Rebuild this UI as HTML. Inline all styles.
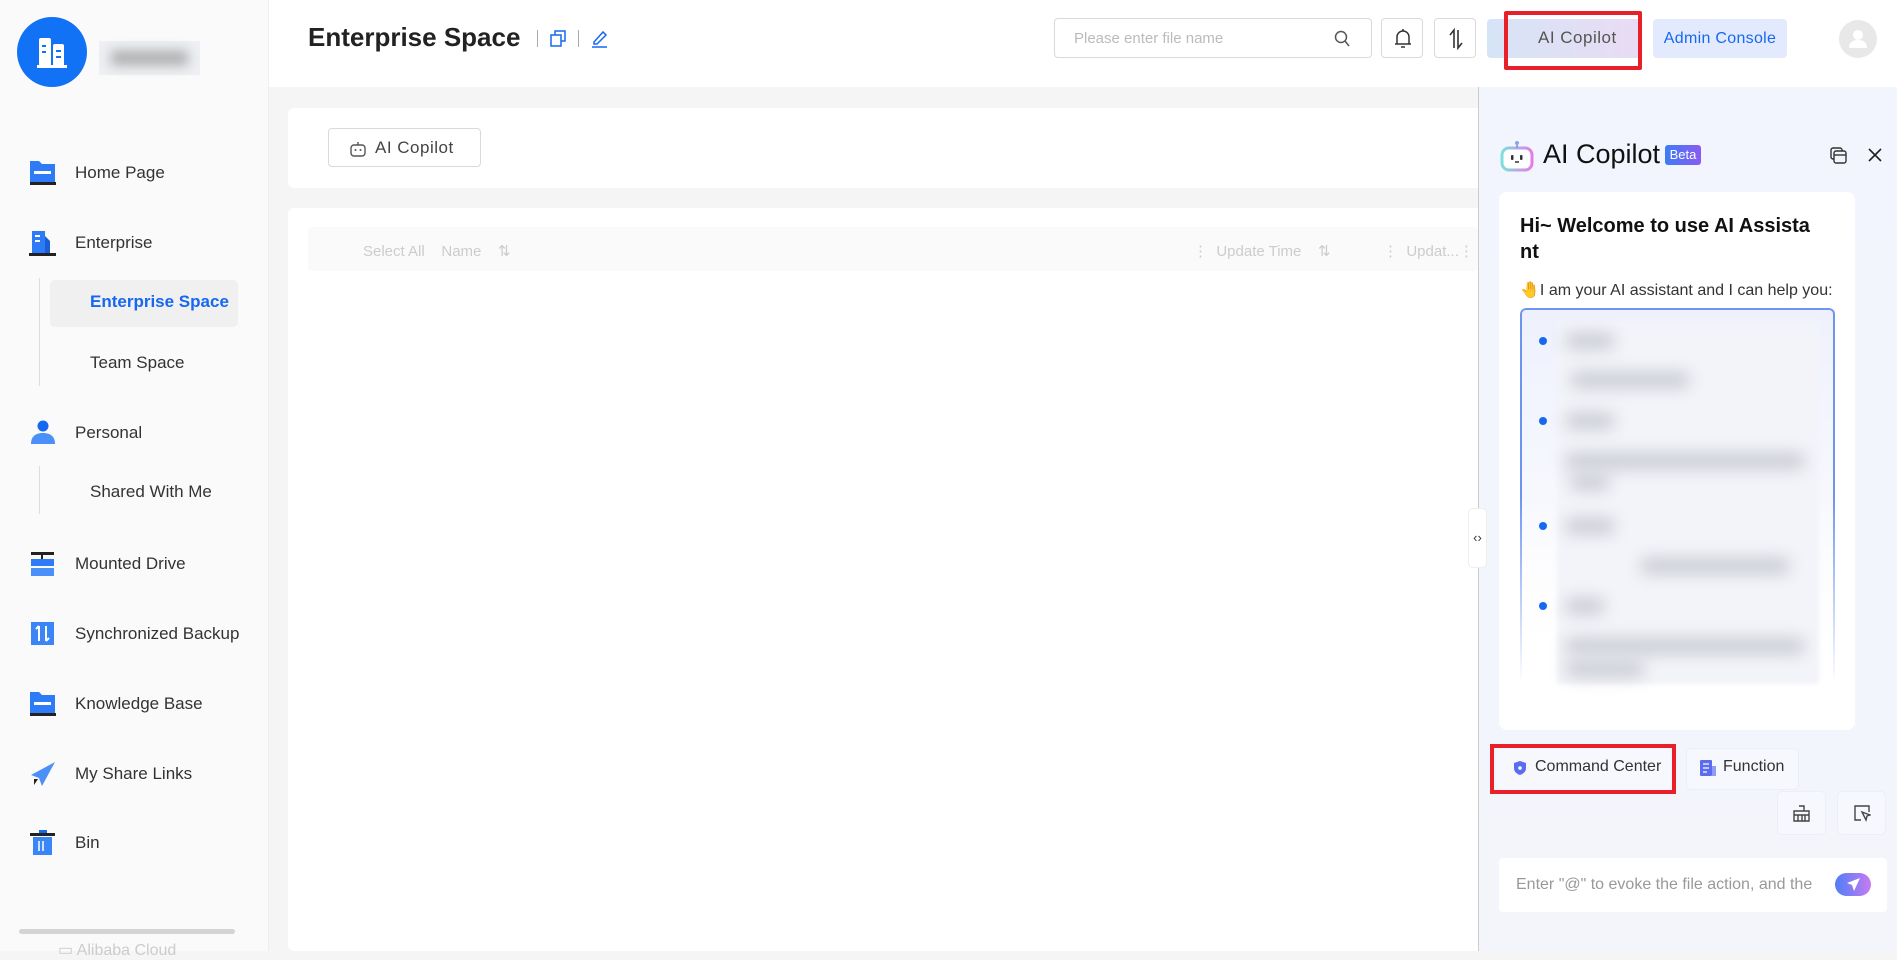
<!DOCTYPE html>
<html><head><meta charset="utf-8"><style>
*{box-sizing:border-box;margin:0;padding:0}
body{width:1897px;height:951px;overflow:hidden;font-family:"Liberation Sans",sans-serif;background:#f5f5f5;position:relative;color:#333}
.abs{position:absolute}
.side{left:0;top:0;width:269px;height:951px;background:#fafafa;border-right:1px solid #efefef}
.nav{position:absolute;left:75px;font-size:17px;color:#333;transform:translateY(-50%)}
.sub{left:90px}
.ico{position:absolute;left:29px;width:27px;height:26px;transform:translateY(-50%)}
.hdr{left:269px;top:0;width:1628px;height:87px;background:#fff}
.btn{position:absolute;border:1px solid #d9d9d9;border-radius:4px;background:#fff}
.blur{position:absolute;background:#c9cbd3;filter:blur(8px);border-radius:8px;height:16px}
</style></head><body>
<div class="abs side">
  <div class="abs" style="left:17px;top:17px;width:70px;height:70px;border-radius:50%;background:#1272f5"></div>
  <svg class="abs" style="left:37px;top:36px" width="30" height="32" viewBox="0 0 30 32"><rect x="2" y="2" width="12" height="28" rx="2" fill="#fff"/><rect x="16" y="8" width="11" height="22" rx="2" fill="#fff"/><rect x="5" y="9" width="4" height="2" fill="#1272f5"/><rect x="5" y="15" width="4" height="2" fill="#1272f5"/><rect x="19" y="14" width="5" height="2" fill="#1272f5"/><rect x="19" y="20" width="5" height="2" fill="#1272f5"/><rect x="0" y="29" width="30" height="3" fill="#fff"/></svg>
  <div class="abs" style="left:99px;top:41px;width:101px;height:34px;background:#eef0f4"><div style="margin:10px 12px;height:14px;background:#aaa;filter:blur(6px)"></div></div>

  <svg class="ico" style="top:173px" viewBox="0 0 27 26"><path d="M1 1h9l3 3h13v19H1z" fill="#2d7bf6"/><rect x="5" y="11" width="17" height="3" fill="#fff"/><rect x="1" y="22" width="26" height="3" fill="#222"/></svg>
  <div class="nav" style="top:173px">Home Page</div>
  <svg class="ico" style="top:243px" viewBox="0 0 27 26"><path d="M3 1h13v22H3z" fill="#2d7bf6"/><path d="M16 6l5 5v12h-5z" fill="#1a5fd6"/><rect x="6" y="5" width="5" height="2" fill="#fff"/><rect x="6" y="10" width="5" height="2" fill="#fff"/><rect x="0" y="23" width="27" height="3" fill="#222"/></svg>
  <div class="nav" style="top:243px">Enterprise</div>
  <div class="abs" style="left:39px;top:278px;width:1px;height:108px;background:#ddd"></div>
  <div class="abs" style="left:50px;top:280px;width:188px;height:47px;background:#f0f0f0;border-radius:5px"></div>
  <div class="nav sub" style="top:302px;color:#1668f0;font-weight:bold">Enterprise Space</div>
  <div class="nav sub" style="top:363px">Team Space</div>
  <svg class="ico" style="top:433px" viewBox="0 0 27 26"><circle cx="14" cy="6" r="5.5" fill="#1668f0"/><path d="M2 24c0-8 5-11 12-11s12 3 12 11z" fill="#4b90f8"/></svg>
  <div class="nav" style="top:433px">Personal</div>
  <div class="abs" style="left:39px;top:466px;width:1px;height:48px;background:#ddd"></div>
  <div class="nav sub" style="top:492px">Shared With Me</div>
  <svg class="ico" style="top:564px" viewBox="0 0 27 26"><rect x="2" y="1" width="23" height="3" fill="#222"/><rect x="12" y="1" width="2" height="8" fill="#222"/><rect x="2" y="8" width="23" height="7" fill="#2d7bf6"/><rect x="2" y="17" width="23" height="8" fill="#4b90f8"/></svg>
  <div class="nav" style="top:564px">Mounted Drive</div>
  <svg class="ico" style="top:634px" viewBox="0 0 27 26"><rect x="2" y="1" width="23" height="23" fill="#3b86f7"/><path d="M10 5v15M7 8l3-3M17 20V5M20 17l-3 3" stroke="#fff" stroke-width="2" fill="none"/></svg>
  <div class="nav" style="top:634px">Synchronized Backup</div>
  <svg class="ico" style="top:704px" viewBox="0 0 27 26"><path d="M1 1h9l3 3h13v19H1z" fill="#2d7bf6"/><rect x="5" y="11" width="17" height="3" fill="#fff"/><rect x="1" y="22" width="26" height="3" fill="#222"/></svg>
  <div class="nav" style="top:704px">Knowledge Base</div>
  <svg class="ico" style="top:774px" viewBox="0 0 27 26"><path d="M26 1L2 14l8 3 3 8z" fill="#4b90f8"/><path d="M5 18l4 0-4 6z" fill="#222"/></svg>
  <div class="nav" style="top:774px">My Share Links</div>
  <svg class="ico" style="top:843px" viewBox="0 0 27 26"><rect x="10" y="0" width="8" height="3" fill="#1668f0"/><rect x="1" y="3" width="25" height="3" fill="#222"/><rect x="4" y="7" width="19" height="18" fill="#3b86f7"/><path d="M10 11v10M14 11v10" stroke="#fff" stroke-width="1.5"/></svg>
  <div class="nav" style="top:843px">Bin</div>
  <div class="abs" style="left:19px;top:929px;width:216px;height:5px;border-radius:3px;background:#d4d4d4"></div>
  <div class="abs" style="left:58px;top:940px;font-size:16px;color:#ccc">▭ Alibaba Cloud</div>
</div>

<div class="abs hdr"></div>
<div class="abs" style="left:308px;top:22px;font-size:26px;font-weight:bold;color:#222">Enterprise Space</div>
<div class="abs" style="left:537px;top:30px;width:1px;height:17px;background:#aaa"></div>
<svg class="abs" style="left:550px;top:30px" width="16" height="17" viewBox="0 0 16 17"><rect x="1" y="5" width="10" height="11" fill="none" stroke="#1668f0" stroke-width="1.5"/><path d="M5 5V1h10v10h-4" fill="none" stroke="#1668f0" stroke-width="1.5"/></svg>
<div class="abs" style="left:578px;top:30px;width:1px;height:17px;background:#aaa"></div>
<svg class="abs" style="left:591px;top:29px" width="17" height="19" viewBox="0 0 17 19"><path d="M3 13L12 3l3 3-9 9H3z" fill="none" stroke="#1668f0" stroke-width="1.5"/><path d="M1 18h15" stroke="#1668f0" stroke-width="1.5"/></svg>

<div class="btn" style="left:1054px;top:18px;width:318px;height:40px"><span style="position:absolute;left:19px;top:11px;font-size:15px;color:#bbb">Please enter file name</span>
<svg style="position:absolute;right:20px;top:11px" width="17" height="18" viewBox="0 0 17 18"><circle cx="7" cy="7" r="5.5" fill="none" stroke="#555" stroke-width="1.5"/><path d="M11 11l4 5" stroke="#555" stroke-width="1.5"/></svg></div>
<div class="btn" style="left:1381px;top:18px;width:42px;height:40px"><svg style="margin:9px 11px" width="20" height="22" viewBox="0 0 20 22"><path d="M4 16V9a6 6 0 0112 0v7h2H2z" fill="none" stroke="#333" stroke-width="1.5"/><path d="M10 1v2M8 19h4" stroke="#333" stroke-width="1.5"/></svg></div>
<div class="btn" style="left:1434px;top:18px;width:42px;height:40px"><svg style="margin:9px 11px" width="20" height="22" viewBox="0 0 20 22"><path d="M8 20V2L4 7M12 2v18l4-5" fill="none" stroke="#333" stroke-width="1.6"/></svg></div>
<div class="abs" style="left:1487px;top:19px;width:153px;height:39px;border-radius:4px;background:linear-gradient(90deg,#d6e4f7,#e9dcf3)"></div>
<div class="abs" style="left:1538px;top:28px;font-size:17px;color:#555;letter-spacing:.5px">AI Copilot</div>
<div class="abs" style="left:1504px;top:11px;width:138px;height:59px;border:4px solid #e8202a;border-radius:2px"></div>
<div class="abs" style="left:1653px;top:19px;width:134px;height:39px;border-radius:4px;background:#e3eafd;color:#1668f0;font-size:16px;text-align:center;line-height:39px;letter-spacing:.3px">Admin Console</div>
<div class="abs" style="left:1839px;top:20px;width:38px;height:38px;border-radius:50%;background:#e8e8e8"><svg width="38" height="38" viewBox="0 0 38 38"><circle cx="19" cy="15" r="5" fill="#fff"/><path d="M10 28c0-6 4-8 9-8s9 2 9 8z" fill="#fff"/></svg></div>

<div class="abs" style="left:288px;top:108px;width:1200px;height:80px;background:#fff;border-radius:6px"></div>
<div class="btn" style="left:328px;top:128px;width:153px;height:39px"><svg style="position:absolute;left:20px;top:12px" width="18" height="16" viewBox="0 0 18 16"><rect x="2" y="4" width="14" height="11" rx="3" fill="none" stroke="#555" stroke-width="1.4"/><path d="M9 1v3" stroke="#555" stroke-width="1.4"/><circle cx="6.5" cy="9" r="1" fill="#555"/><circle cx="11.5" cy="9" r="1" fill="#555"/></svg><span style="position:absolute;left:46px;top:9px;font-size:17px;color:#444;letter-spacing:.5px">AI Copilot</span></div>
<div class="abs" style="left:288px;top:208px;width:1200px;height:743px;background:#fff;border-radius:6px"></div>
<div class="abs" style="left:308px;top:227px;width:1170px;height:44px;background:#fafafa;border-radius:4px"></div>
<div class="abs" style="left:363px;top:242px;font-size:15px;color:#ccc">Select All&nbsp;&nbsp;&nbsp;&nbsp;Name&nbsp;&nbsp;&nbsp;&nbsp;⇅</div>
<div class="abs" style="left:1193px;top:242px;font-size:15px;color:#ccc">⋮&nbsp;&nbsp;Update Time&nbsp;&nbsp;&nbsp;&nbsp;⇅</div>
<div class="abs" style="left:1383px;top:242px;font-size:15px;color:#ccc">⋮&nbsp;&nbsp;Updat...⋮</div>

<div class="abs" style="left:1478px;top:87px;width:419px;height:864px;background:linear-gradient(180deg,#f2f5fd,#f3f5fb);border-left:1px solid #ccc"></div>
<div class="abs" style="left:1468px;top:508px;width:19px;height:60px;background:#fff;border:1px solid #eee;border-radius:5px;font-size:13px;line-height:58px;text-align:center;color:#333">‹›</div>
<svg class="abs" style="left:1499px;top:140px" width="36" height="32" viewBox="0 0 36 32"><defs><linearGradient id="g" x1="0" x2="1"><stop offset="0" stop-color="#7de0d9"/><stop offset="1" stop-color="#e37be8"/></linearGradient></defs><rect x="3" y="8" width="30" height="22" rx="7" fill="#fff" stroke="url(#g)" stroke-width="3"/><circle cx="18" cy="3" r="2" fill="#8aa2f0"/><path d="M18 5v3" stroke="#8aa2f0" stroke-width="2"/><rect x="12" y="15" width="2.5" height="5" rx="1" fill="#333"/><rect x="21" y="15" width="2.5" height="5" rx="1" fill="#333"/><path d="M16 22h4" stroke="#333" stroke-width="1.5"/></svg>
<div class="abs" style="left:1543px;top:139px;font-size:27px;color:#111">AI Copilot</div>
<div class="abs" style="left:1665px;top:145px;width:36px;height:20px;border-radius:3px;background:linear-gradient(90deg,#3d7cf7,#8a5cf0);color:#fff;font-size:13px;text-align:center;line-height:20px">Beta</div>
<svg class="abs" style="left:1830px;top:147px" width="17" height="17" viewBox="0 0 17 17"><rect x="1" y="1" width="11" height="11" rx="2" fill="none" stroke="#333" stroke-width="1.4"/><rect x="4" y="4" width="12" height="12" rx="2" fill="#f2f5fd" stroke="#333" stroke-width="1.4"/><path d="M4 8h12" stroke="#333" stroke-width="1.4"/></svg>
<svg class="abs" style="left:1868px;top:148px" width="14" height="14" viewBox="0 0 14 14"><path d="M1 1l12 12M13 1L1 13" stroke="#222" stroke-width="1.6"/></svg>

<div class="abs" style="left:1499px;top:192px;width:356px;height:538px;background:#fff;border-radius:8px"></div>
<div class="abs" style="left:1520px;top:213px;font-size:20px;font-weight:bold;color:#111;line-height:26px;white-space:nowrap">Hi~ Welcome to use AI Assista<br>nt</div>
<div class="abs" style="left:1520px;top:280px;font-size:16px;color:#333">🤚I am your AI assistant and I can help you:</div>
<div class="abs" style="left:1520px;top:308px;width:315px;height:377px;border:2px solid #6d95f0;border-bottom:none;border-radius:6px 6px 0 0;background:linear-gradient(180deg,#eef1fd,#fff 95%);-webkit-mask-image:linear-gradient(180deg,#000 50%,transparent)"></div>
<div class="abs" style="left:1557px;top:321px;width:262px;height:363px;background:#f3f4f9;filter:blur(2px)"></div>
<div class="blur" style="left:1565px;top:333px;width:50px"></div>
<div class="blur" style="left:1570px;top:372px;width:120px"></div>
<div class="blur" style="left:1565px;top:413px;width:50px"></div>
<div class="blur" style="left:1565px;top:453px;width:240px"></div>
<div class="blur" style="left:1570px;top:474px;width:40px"></div>
<div class="blur" style="left:1565px;top:518px;width:50px"></div>
<div class="blur" style="left:1640px;top:558px;width:150px"></div>
<div class="blur" style="left:1565px;top:598px;width:40px"></div>
<div class="blur" style="left:1565px;top:638px;width:240px"></div>
<div class="blur" style="left:1565px;top:661px;width:80px"></div>
<div class="abs" style="left:1539px;top:337px;width:8px;height:8px;border-radius:50%;background:#1668f0"></div>
<div class="abs" style="left:1539px;top:417px;width:8px;height:8px;border-radius:50%;background:#1668f0"></div>
<div class="abs" style="left:1539px;top:522px;width:8px;height:8px;border-radius:50%;background:#1668f0"></div>
<div class="abs" style="left:1539px;top:602px;width:8px;height:8px;border-radius:50%;background:#1668f0"></div>

<div class="abs" style="left:1496px;top:748px;width:175px;height:42px;background:#f7f8fd;border-radius:5px"></div>
<svg class="abs" style="left:1513px;top:760px" width="14" height="16" viewBox="0 0 14 16"><path d="M7 1l6 2v5c0 4-3 6-6 7-3-1-6-3-6-7V3z" fill="#5b6cf0"/><circle cx="7" cy="8" r="1.8" fill="#fff"/></svg>
<div class="abs" style="left:1535px;top:758px;font-size:16px;color:#333">Command Center</div>
<div class="abs" style="left:1490px;top:744px;width:186px;height:50px;border:4px solid #e8202a"></div>
<div class="abs" style="left:1686px;top:748px;width:113px;height:42px;background:#f7f8fd;border-radius:5px;border:1px solid #eceef8"></div>
<svg class="abs" style="left:1700px;top:760px" width="16" height="16" viewBox="0 0 16 16"><rect x="0" y="0" width="12" height="16" rx="1" fill="#5b6cf0"/><rect x="12" y="6" width="4" height="10" fill="#8f9cf5"/><path d="M3 4h6M3 8h6M3 12h4" stroke="#fff" stroke-width="1.3"/></svg>
<div class="abs" style="left:1723px;top:758px;font-size:16px;color:#333">Function</div>
<div class="abs" style="left:1777px;top:791px;width:49px;height:44px;background:#f7f8fd;border-radius:5px;border:1px solid #eceef8"><svg style="margin:13px 15px" width="17" height="17" viewBox="0 0 17 17"><path d="M6 1h5v5M1 6h15v10H1zM1 10h15M5 10v6M9 10v6M12 10v6" fill="none" stroke="#444" stroke-width="1.4"/></svg></div>
<div class="abs" style="left:1837px;top:791px;width:49px;height:44px;background:#f7f8fd;border-radius:5px;border:1px solid #eceef8"><svg style="margin:13px 16px" width="17" height="17" viewBox="0 0 17 17"><path d="M7 15H1V1h14v6" fill="none" stroke="#444" stroke-width="1.4"/><path d="M8 7l8 3-3 1-1 4z" fill="none" stroke="#444" stroke-width="1.4"/></svg></div>
<div class="abs" style="left:1499px;top:858px;width:388px;height:54px;background:#fff;border-radius:4px"></div>
<div class="abs" style="left:1516px;top:876px;font-size:16px;color:#999;white-space:nowrap">Enter "@" to evoke the file action, and the</div>
<div class="abs" style="left:1835px;top:873px;width:36px;height:23px;border-radius:12px;background:linear-gradient(90deg,#4f7ef8,#c77cf0)"><svg style="margin:4px 11px" width="15" height="15" viewBox="0 0 15 15"><path d="M14 1L1 6l5 2 2 6z" fill="#fff"/></svg></div>
</body></html>
